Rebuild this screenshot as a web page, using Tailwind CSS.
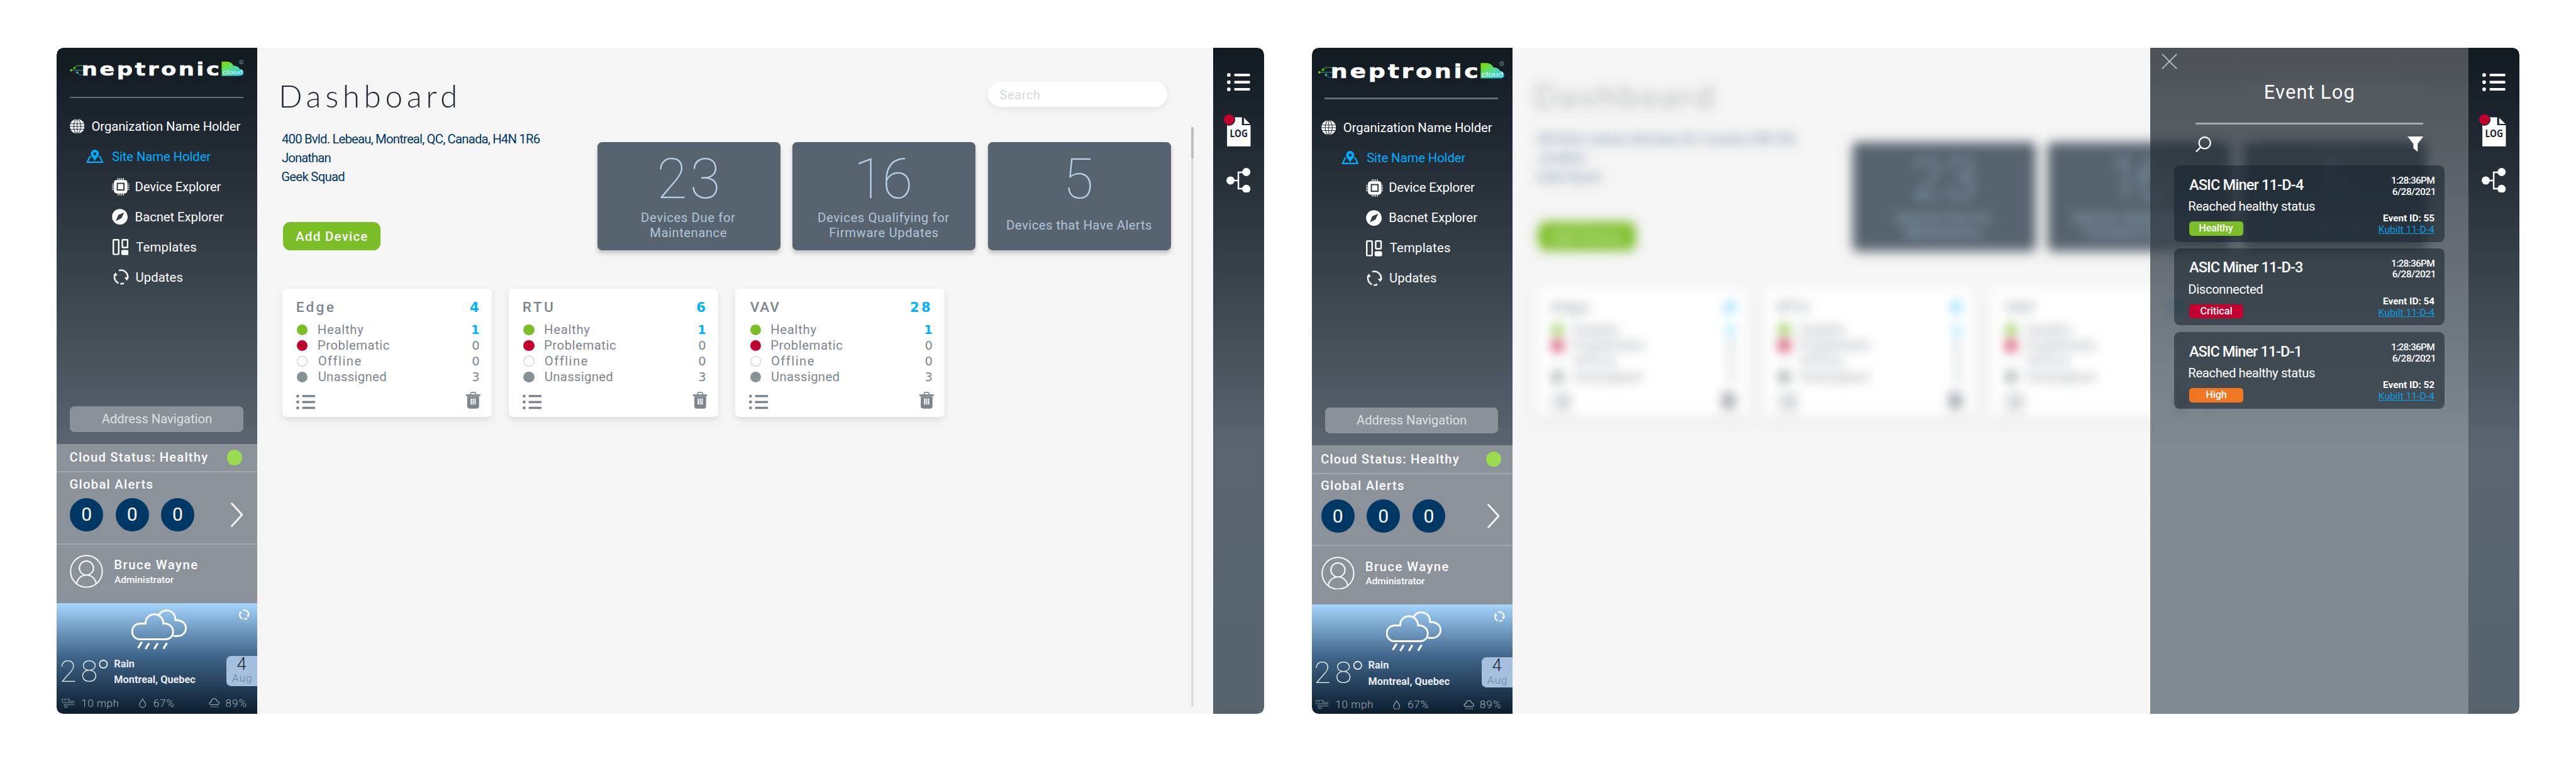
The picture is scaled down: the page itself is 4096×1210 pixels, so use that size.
<!DOCTYPE html>
<html lang="en">
<head>
<meta charset="utf-8">
<title>Neptronic Cloud – Dashboard</title>
<script src="https://cdn.jsdelivr.net/npm/@tailwindcss/browser@4"></script>
</head>
<body class="bg-white overflow-hidden">
<div id="app" class="flex gap-[94px] w-[5038px] h-[1488px] pt-[93px] pl-[111px] [zoom:0.81302] font-[Roboto,sans-serif] text-[25px]"></div>

<script>
// A text run set to a given width by tracking.
const t = (text, w, cls = '') => `<span data-w="${w}" class="inline-block whitespace-nowrap ${cls}">${text}</span>`;

const icons = {
  globe: `<svg class="size-[29px] shrink-0" viewBox="0 0 29 29"><circle cx="14.500" cy="14.500" r="14.300" fill="#fff"/><g fill="none" stroke="#27313a" stroke-width="1.300"><path d="M14.500 0v29M1 9.500h27M0 14.800h29M1 20.300h27"/><ellipse cx="14.500" cy="14.500" rx="6.800" ry="14.300"/></g></svg>`,
  site: `<svg class="w-[34px] h-[27px] shrink-0" viewBox="0 0 34 27" fill="none"><path d="M9.500 14H7L2 24.500h30L27 14h-2.500" stroke="#00aeff" stroke-width="2.600"/><path fill="#00aeff" fill-rule="evenodd" d="M17 0a8 8 0 0 1 8 8c0 5-5.500 8-8 14.500C14.500 16 9 13 9 8a8 8 0 0 1 8-8zm0 5.200a3 3 0 1 0 0 6 3 3 0 0 0 0-6z"/></svg>`,
  chip: `<svg class="size-[34px] shrink-0" viewBox="0 0 34 34"><path d="M12 0v34M15.500 0v34M19 0v34M22.500 0v34M0 12h34M0 15.500h34M0 19h34M0 22.500h34" stroke="#fff" stroke-width="1.500"/><rect x="4" y="4" width="26" height="26" rx="5" fill="#fff"/><rect x="10.500" y="10.500" width="13" height="13" fill="#fff" stroke="#2c363f" stroke-width="2.400"/></svg>`,
  compass: `<svg class="size-[31px] shrink-0" viewBox="0 0 31 31"><circle cx="15.500" cy="15.500" r="15.300" fill="#fff"/><path d="M24 7l-5.500 11.500L7.500 24 12.500 12z" fill="#323c45"/></svg>`,
  templates: `<svg class="w-[31px] h-[32px] shrink-0 ml-[1px]" viewBox="0 0 31 32" fill="none" stroke="#fff" stroke-width="3"><rect x="1.500" y="1.500" width="10.500" height="28.500" rx="1"/><rect x="19" y="1.500" width="10.500" height="15" rx="1"/><rect x="18.500" y="23" width="11.500" height="7" rx="1" fill="#fff"/></svg>`,
  updates: `<svg class="size-[31px] shrink-0 ml-[2px]" viewBox="0 0 31 31" fill="none" stroke="#fff" stroke-width="3"><path d="M11 2.700A13 13 0 0 1 28 18M21 27.200a13 13 0 0 1-7 1.300M10.500 27.500A13 13 0 0 1 3.500 10.500"/><path fill="#fff" stroke="none" d="M22 16h9l-4.500 6.500zM0 12.500h8.500L4.500 6.500z"/></svg>`,
  list: (cls) => `<svg class="${cls}" viewBox="0 0 44 35" fill="currentColor"><circle cx="3.500" cy="3.800" r="3.500"/><circle cx="3.500" cy="17.500" r="3.500"/><circle cx="3.500" cy="31.200" r="3.500"/><rect x="14" y="1.300" width="30" height="5" rx="1"/><rect x="14" y="15" width="30" height="5" rx="1"/><rect x="14" y="28.700" width="30" height="5" rx="1"/></svg>`,
  trash: `<svg class="w-[28px] h-[33px]" viewBox="0 0 28 33" fill="#7d868f"><path d="M9 5V3.500A3 3 0 0 1 12 1h4a3 3 0 0 1 3 2.500V5" fill="none" stroke="#7d868f" stroke-width="2"/><path d="M0 5h28v3.500H0z"/><path fill-rule="evenodd" d="M2.500 9h23v19a5 5 0 0 1-5 5h-13a5 5 0 0 1-5-5zM9 13v12h2.500V13zm4 0v12h2V13zm3.500 0v12H19V13z"/></svg>`,
};

const logo = (cls) => `
<svg class="${cls}" viewBox="0 0 340 42">
  <defs>
    <linearGradient id="cloud" x1="0" y1="0" x2="1" y2="1"><stop offset=".1" stop-color="#76dd0a"/><stop offset=".55" stop-color="#4fd9a8"/><stop offset="1" stop-color="#14b4f5"/></linearGradient>
  </defs>
  <g fill="none" stroke-width="1.300"><path d="M9 18l5-4h13" stroke="#4aa53c"/><path d="M2 23h25" stroke="#3da08c"/><path d="M14 28l7 4.500h6" stroke="#17759c"/></g>
  <circle cx="2.500" cy="23" r="2.300" fill="#76c800"/><circle cx="9" cy="18.500" r="2.300" fill="#5db800"/><circle cx="14.500" cy="27.500" r="2.200" fill="#3cb4a0"/>
  <text x="23" y="33.500" textLength="274" lengthAdjust="spacingAndGlyphs" letter-spacing="3.500" fill="#fff" stroke="#fff" stroke-width=".7" font-family="DejaVu Sans" font-weight="bold" font-size="35">neptronic</text>
  <path d="M297 6h9c8 0 12 3 14 8 7 0 11 3 12 6 5 1 8 4 8 8s-4 6-8 6h-35z" fill="url(#cloud)"/>
  <text x="299" y="31" textLength="39" lengthAdjust="spacingAndGlyphs" fill="#e4fff8" font-family="Roboto" font-size="12">cloud</text>
  <circle cx="335.500" cy="7" r="3.800" fill="none" stroke="#8b9299" stroke-width="1"/><text x="333.500" y="9.500" fill="#8b9299" font-family="Roboto" font-size="6">R</text>
</svg>`;

const navRow = (icon, iconBox, label, w, cls) => `
<a class="flex items-center h-[59px] ${cls}"><span class="flex items-center shrink-0 ${iconBox}">${icon}</span>${t(label, w)}</a>`;

const sidebar = (s) => `
<aside class="flex flex-col w-[392px] shrink-0 text-white rounded-l-[13px] overflow-hidden bg-linear-to-b from-[#111921] via-[#5a656f] via-60% to-[#5a656f]">
  <div class="flex flex-col shrink-0 ${s.top}">
    ${logo(s.logo)}
    <div class="h-[3px] w-[340px] bg-[#646b72] shrink-0 ${s.rule}"></div>
    <nav class="flex flex-col mt-[26px] ${s.nav}">
      ${navRow(icons.globe, 'w-[44px]', 'Organization Name Holder', 291, 'pl-[7px]')}
      ${navRow(icons.site, 'w-[50px]', 'Site Name Holder', 194, 'text-[#00aeff] ' + s.site)}
      ${navRow(icons.chip, 'w-[47px]', 'Device Explorer', 167, s.sub)}
      ${navRow(icons.compass, 'w-[47px]', 'Bacnet Explorer', 172, s.sub)}
      ${navRow(icons.templates, 'w-[47px]', 'Templates', 118, s.sub)}
      ${navRow(icons.updates, 'w-[47px]', 'Updates', 91, s.sub)}
    </nav>
    <button class="mt-auto mb-[23px] w-[339px] h-[51px] rounded-[9px] bg-[#8a9199] text-[#dfe1e3] leading-[51px] ${s.btn}">${t('Address Navigation', 215)}</button>
  </div>
  <div class="bg-[#8b929a] shrink-0 font-medium">
    <div class="flex items-center justify-between h-[56px] border-b-[3px] border-[#a2a6af] ${s.sec} ${s.dot}">
      ${t('Cloud Status: Healthy', 270)}<span class="size-[30px] rounded-full bg-[#9cda4f]"></span>
    </div>
    <div class="h-[141px] border-b-[3px] border-[#a2a6af] pt-[7px] ${s.sec}">
      <div class="leading-[32px]">${t('Global Alerts', 161)}</div>
      <div class="flex items-center gap-[24px] mt-[11px] text-[37px] font-normal">
        ${'<span class="size-[65px] rounded-full bg-[#003865] flex items-center justify-center leading-none">0</span>'.repeat(3)}
        <svg class="w-[24px] h-[48px] ${s.chevron}" viewBox="0 0 24 48" fill="none" stroke="#fff" stroke-width="3.500" stroke-linecap="round" stroke-linejoin="round"><path d="M2 2l20 22L2 46"/></svg>
      </div>
    </div>
    <div class="flex h-[114px] pt-[20px] ${s.sec}">
      <svg class="size-[65px]" viewBox="0 0 65 65" fill="none" stroke="#fff" stroke-width="2.400"><circle cx="32.500" cy="32.500" r="31"/><circle cx="32.500" cy="26" r="13.800"/><path d="M13.500 57c1-10 9-17.200 19-17.200S50.500 47 51.500 57"/></svg>
      <div class="ml-[22px] pt-[5px]">
        <div class="leading-[30px]">${t('Bruce Wayne', 162)}</div>
        <div class="leading-[28px] text-[19px]">${t('Administrator', 116)}</div>
      </div>
    </div>
  </div>
  <div class="relative flex-1 bg-linear-to-b from-[#a6d5fc] via-[#40658a] via-48% to-[#0c1e2f] ${s.wx}">
    <svg class="w-[108px] h-[80px] mx-auto mt-[13px]" viewBox="0 0 108 80" fill="none" stroke="#fff" stroke-width="3.600"><path d="M15 58.500A15.500 15.500 0 0 1 17 27.600h10.500C27.500 16 36 9.500 45 9.500S62.500 17 62.500 27.600c10-1 19 6 19 15.400 0 10-7 15.500-14.500 15.500z"/><path d="M53 12C57 4.500 62 2 69 2c10 0 17 7.500 17 19 12-1 20.500 6.500 20.500 15.500S99 52 90 52h-8"/><path d="M20.500 63.500l-7.500 12M34.500 66l-7 11.500M51.500 66l-7 11.500M69.500 65.500l-7 11.500" stroke-width="4"/></svg>
    <svg class="absolute right-[14px] top-[13px] w-[23px] h-[21px]" viewBox="0 0 31 31" fill="none" stroke="#fff" stroke-width="4"><path d="M11 2.700A13 13 0 0 1 28 18M24 25a13 13 0 0 1-9 3.500M10.500 27.500A13 13 0 0 1 3.500 10.500"/><path fill="#fff" stroke="none" d="M22 16h9l-4.500 8zM0 12.500h8.500L4.500 4.500z"/></svg>
    <div class="flex mt-[11px] h-[61px]">
      <div class="flex w-[104px] text-[60px] leading-[62px] font-thin text-[#eef3f7]">${t('28', 69)}<span class="ml-[4px] text-[75px] leading-[73px]">${t('°', 20)}</span></div>
      <div class="text-[20px] font-bold text-[#e9edf1]"><div class="leading-[31px]">${t('Rain', 39)}</div><div class="leading-[31px]">${t('Montreal, Quebec', 158)}</div></div>
      <div class="ml-auto w-[60px] h-[59px] rounded-l-[9px] bg-[#a5bfde] text-center"><div class="text-[34px] leading-[31px] font-light text-[#1c2630]">${t('4', 19)}</div><div class="text-[21px] leading-[26px] font-light text-[#6b8197]">${t('Aug', 38)}</div></div>
    </div>
    <div class="flex items-center mt-[15px] text-[21px] leading-[32px] font-light text-[#a3adb7]">
      <svg class="w-[26px] h-[20px]" viewBox="0 0 26 20" fill="none" stroke="#65757f" stroke-width="1.800"><path d="M1 7V2h6v4M9 2h6v4M1 9h24M4 13h21M6 13v5h5v-4"/><path d="M13 6h12"/></svg>
      <span class="ml-[14px] w-[112px]">${t('10 mph', 71)}</span>
      <svg class="w-[14px] h-[19px]" viewBox="0 0 14 19" fill="none" stroke="#8d98a3" stroke-width="1.600"><path d="M7 1.500C9 6 13 9 13 12.500a6 5.700 0 0 1-12 0C1 9 5 6 7 1.500z"/></svg>
      <span class="ml-[15px] w-[108px]">${t('67%', 39)}</span>
      <svg class="w-[21px] h-[19px]" viewBox="0 0 21 19" fill="none" stroke="#8d98a3" stroke-width="1.800"><path d="M4 13C0 12 1 7 5 7c0-7 10-8 11-1 5 0 5 7 1 7zM5 16v2M9 16v2M13 16v2M17 16v2"/></svg>
      <span class="ml-[12px]">${t('89%', 40)}</span>
    </div>
  </div>
</aside>`;

const stat = (n, w, lines) => `
<div class="w-[358px] h-[211px] rounded-[9px] bg-[#57646f] shadow-[0_5px_8px_rgba(0,0,0,0.2)] flex flex-col items-center">
  <div class="mt-[18px] text-[109px] leading-[110px] font-thin text-[#b7d0ea]">${t(n, w)}</div>
  <div class="flex-1 flex flex-col items-center justify-center leading-[30px] pb-[14px] text-[#afc4da]">${lines.map(([s, lw]) => t(s, lw)).join('')}</div>
</div>`;

const row = (dot, label, w, n, cls) => `
<div class="flex items-center h-[30.700px]"><span class="size-[21px] rounded-full ${dot}"></span><span class="ml-[21px]">${t(label, w)}</span><span class="ml-auto -mr-[1px] font-[DejaVu_Sans] text-[24px] ${cls}">${n}</span></div>`;

const device = (name, w, n) => `
<div class="w-[410px] h-[252px] rounded-[9px] bg-white shadow-[0_5px_12px_rgba(0,0,0,0.09)] pl-[29px] pr-[25px] text-[#7d868f]">
  <div class="flex justify-between mt-[22px] h-[32px] leading-[32px] text-[28px] font-medium">${t(name, w)}<span class="font-[DejaVu_Sans] text-[26px] font-bold text-[#00b2ff] ${n.length > 1 ? 'tracking-[4px] -mr-[1px]' : ''}">${n}</span></div>
  <div class="mt-[12px]">
    ${row('bg-[#7bbe27]', 'Healthy', 88, 1, 'text-[#00b2ff] font-bold')}
    ${row('bg-[#c1002f]', 'Problematic', 139, 0, '')}
    ${row('border-2 border-[#b9c3c2]', 'Offline', 81, 0, '')}
    ${row('bg-[#869396]', 'Unassigned', 132, 3, '')}
  </div>
  <div class="flex justify-between mt-[14px]">${icons.list('w-[37px] h-[30px] -ml-[2px] mt-[4px]')}<span class="-mr-[3px]">${icons.trash}</span></div>
</div>`;

const main = (blur, title) => `
<main class="relative w-[1870px] shrink-0 h-full bg-[#f5f5f5] overflow-hidden">
  <div class="h-full pl-[48px] ${blur}">
    <div class="flex h-[156px]">
      <h1 class="mt-[60px] text-[61px] leading-[70px] font-light text-[#1d2833] font-[Lato] ${title}">${t('Dashboard', 339)}</h1>
      <div class="ml-auto mr-[90px] mt-[67px] w-[351px] h-[49px] rounded-full bg-white shadow-[0_5px_10px_rgba(0,0,0,0.07)] pl-[23px] leading-[53px] text-[24px] text-[#d3dcda]">${t('Search', 78)}</div>
    </div>
    <div class="flex">
      <div class="w-[617px] shrink-0 pt-[5px] text-[#003865]">
        <div class="${title}">
          <div class="leading-[36px]">${t('400 Bvld. Lebeau, Montreal, QC, Canada, H4N 1R6', 505)}</div>
          <div class="leading-[38px]">${t('Jonathan', 96)}</div>
          <div class="leading-[36px]">${t('Geek Squad', 123)}</div>
        </div>
        <button class="ml-[2px] mt-[70px] w-[191px] h-[55px] rounded-[14px] bg-[#7bbe27] text-white font-medium leading-[57px]">${t('Add Device', 140)}</button>
      </div>
      <div class="flex gap-[24px] mt-[29px]">
        ${stat('23', 113, [['Devices Due for', 183], ['Maintenance', 148]])}
        ${stat('16', 101, [['Devices Qualifying for', 256], ['Firmware Updates', 211]])}
        ${stat('5', 54, [['Devices that Have Alerts', 282]])}
      </div>
    </div>
    <div class="flex gap-[33px] mt-[75px] ml-px">
      ${device('Edge', 72, '4')}${device('RTU', 57, '6')}${device('VAV', 57, '28')}
    </div>
  </div>
  <div class="absolute right-[38px] top-[156px] w-[6px] h-[1133px] rounded-full bg-[#dedede] ${blur ? 'hidden' : ''}"><div class="h-[61px] rounded-full bg-[#bdbdbd]"></div></div>
</main>`;

const rail = `
<div class="w-[99px] h-full shrink-0 rounded-r-[13px] bg-linear-to-b from-[#111921] via-[#5a656f] via-60% to-[#56636d] flex flex-col items-center text-white">
  ${icons.list('w-[45px] h-[36px] mt-[50px]')}
  <svg class="w-[54px] h-[66px] mt-[43px] mr-[6px]" viewBox="0 0 54 66"><path d="M7.500 8h29v15.500h17V65h-46z" fill="#fff"/><path d="M40.500 9l12 12h-12z" fill="#fff"/><circle cx="11.500" cy="12.500" r="12" fill="#1d2731"/><circle cx="11.500" cy="12.500" r="10.200" fill="#c1002f"/><text x="13" y="47" textLength="35" lengthAdjust="spacingAndGlyphs" font-family="Noto Sans" font-weight="bold" font-size="19" fill="#1d2731">LOG</text></svg>
  <svg class="w-[47px] h-[49px] mt-[40px]" viewBox="0 0 47 49" fill="#fff"><path d="M8 24.500h15M38 8.500H23.500v32H38" fill="none" stroke="#fff" stroke-width="3"/><circle cx="8" cy="24.500" r="8"/><circle cx="39" cy="8" r="8"/><circle cx="39" cy="41" r="8"/></svg>
</div>`;

const event = (name, w, desc, dw, tag, tw, color, id) => `
<article class="flex justify-between w-[530px] h-[150px] rounded-[11px] bg-[#14202b]/55 pl-[30px] pr-[20px]">
  <div>
    <div class="mt-[20px] leading-[36px] text-[29px] font-medium">${t(name, w)}</div>
    <div class="mt-[8px] leading-[34px]">${t(desc, dw)}</div>
    <div class="mt-[11px] w-[106px] h-[28px] rounded-[6px] text-center text-[20px] leading-[27px] font-medium ${color}">${t(tag, tw)}</div>
  </div>
  <div class="flex flex-col items-end text-[19px] leading-[22px] pt-[19px] pb-[13px]">
    ${t('1:28:36PM', 84, 'font-medium')}${t('6/28/2021', 82, 'font-medium')}
    ${t('Event ID: ' + id, 100, 'font-bold mt-auto')}${t('Kubilt 11-D-4', 109, 'underline text-[#0c9fe3]')}
  </div>
</article>`;

const eventLog = `
<section class="absolute right-[99px] top-0 w-[623px] h-full flex flex-col items-center text-white bg-linear-to-b from-[#131b23]/75 via-[#5a656f]/75 via-60% to-[#58656f]/75">
  <svg class="absolute left-[22px] top-[11px] size-[31px]" viewBox="0 0 31 31" stroke="#b4bfc9" stroke-width="2.200"><path d="M1 1l29 29M30 1L1 30"/></svg>
  <h2 class="mt-[63px] leading-[50px] text-[38px]">${t('Event Log', 172)}</h2>
  <div class="mt-[34px] w-[446px] h-[3px] bg-[#a4a9ae]"></div>
  <div class="flex justify-between w-[446px] mt-[24px] h-[57px]">
    <svg class="size-[31px]" viewBox="0 0 31 31" fill="none" stroke="#fff" stroke-width="2.800"><circle cx="18" cy="12.500" r="11.200"/><path d="M10 21L1 30"/></svg>
    <svg class="w-[31px] h-[30px]" viewBox="0 0 31 30" fill="#fff"><path d="M0 0h31L20 14v16l-8.500-7v-9z"/></svg>
  </div>
  ${event('ASIC Miner 11-D-4', 224, 'Reached healthy status', 246, 'Healthy', 66, 'bg-[#7bbe27]', 55)}
  <div class="h-[12px]"></div>
  ${event('ASIC Miner 11-D-3', 222, 'Disconnected', 144, 'Critical', 61, 'bg-[#c1002f]', 54)}
  <div class="h-[14px]"></div>
  ${event('ASIC Miner 11-D-1', 216, 'Reached healthy status', 246, 'High', 39, 'bg-[#f07622]', 52)}
</section>`;

const left = { top: 'h-[775px]', logo: 'w-[340px] h-[42px] ml-[25px] mt-[22px] shrink-0', rule: 'ml-[25px] mt-[32px]', nav: 'pl-[18px]', site: 'pl-[40px]', sub: 'pl-[90px]', btn: 'ml-[26px]', sec: 'pl-[26px]', dot: 'pr-[29px]', chevron: 'ml-[48px]', wx: 'pl-[9px]' };
const right = { top: 'h-[778px]', logo: 'w-[366px] h-[45px] ml-[11px] mt-[24px] shrink-0', rule: 'ml-[24px] mt-[29px]', nav: 'pl-[11px]', site: 'pl-[46px]', sub: 'pl-[94px]', btn: 'ml-[25px]', sec: 'pl-[18px]', dot: 'pr-[22px]', chevron: 'ml-[58px]', wx: 'pl-[7px]' };

document.getElementById('app').innerHTML = `
<section class="flex w-[2361px] h-[1303px] shrink-0 rounded-[13px] overflow-hidden">${sidebar(left)}${main('', '')}${rail}</section>
<section class="relative flex w-[2361px] h-[1303px] shrink-0 rounded-[13px] overflow-hidden">${sidebar(right)}${main('blur-[11px]', 'opacity-60')}${rail}${eventLog}</section>`;

// Track each run so its ink spans exactly the requested width.
const ctx = document.createElement('canvas').getContext('2d');
function fit() {
  document.querySelectorAll('[data-w]').forEach((el) => {
    const cs = getComputedStyle(el);
    ctx.font = `${cs.fontWeight} ${cs.fontSize} ${cs.fontFamily}`;
    const m = ctx.measureText(el.textContent);
    const n = el.textContent.length;
    const ink = m.actualBoundingBoxLeft + m.actualBoundingBoxRight;
    const ls = n > 1 ? (el.dataset.w - ink) / (n - 1) : 0;
    el.style.letterSpacing = ls + 'px';
    el.style.marginLeft = m.actualBoundingBoxLeft + 'px';
    el.style.marginRight = -(ls + m.width - m.actualBoundingBoxRight) + 'px';
  });
}
fit();
addEventListener('load', fit);
new ResizeObserver(fit).observe(document.getElementById('app'));
</script>
</body>
</html>
